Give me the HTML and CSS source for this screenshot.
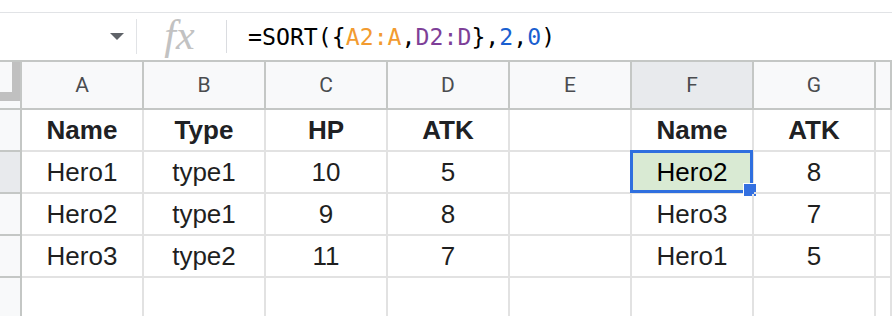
FILE: index.html
```html
<!DOCTYPE html>
<html>
<head>
  <title>Sheet - SORT</title>
  <link rel="stylesheet" href="styles.css">
</head>
<body>
  <div class="top-band"></div>

  <div class="formula-bar">
    <div class="name-box"><span class="caret"></span></div>
    <div class="fx">fx</div>
    <div class="formula">=SORT({<span class="ref-a">A2:A</span>,<span class="ref-d">D2:D</span>},<span class="num">2</span>,<span class="num">0</span>)</div>
  </div>

  <div class="sheet">
    <!-- column headers -->
    <div class="corner"><div class="freeze"></div></div>
    <div class="col-head">A</div>
    <div class="col-head">B</div>
    <div class="col-head">C</div>
    <div class="col-head">D</div>
    <div class="col-head">E</div>
    <div class="col-head active">F</div>
    <div class="col-head">G</div>
    <div class="col-head"></div>

    <!-- row 1 -->
    <div class="row-head"></div>
    <div class="cell bold">Name</div>
    <div class="cell bold">Type</div>
    <div class="cell bold">HP</div>
    <div class="cell bold">ATK</div>
    <div class="cell"></div>
    <div class="cell bold">Name</div>
    <div class="cell bold">ATK</div>
    <div class="cell"></div>

    <!-- row 2 -->
    <div class="row-head active"></div>
    <div class="cell">Hero1</div>
    <div class="cell">type1</div>
    <div class="cell">10</div>
    <div class="cell">5</div>
    <div class="cell"></div>
    <div class="cell selected">Hero2<span class="sel-box"></span><span class="handle"></span></div>
    <div class="cell">8</div>
    <div class="cell"></div>

    <!-- row 3 -->
    <div class="row-head"></div>
    <div class="cell">Hero2</div>
    <div class="cell">type1</div>
    <div class="cell">9</div>
    <div class="cell">8</div>
    <div class="cell"></div>
    <div class="cell">Hero3</div>
    <div class="cell">7</div>
    <div class="cell"></div>

    <!-- row 4 -->
    <div class="row-head"></div>
    <div class="cell">Hero3</div>
    <div class="cell">type2</div>
    <div class="cell">11</div>
    <div class="cell">7</div>
    <div class="cell"></div>
    <div class="cell">Hero1</div>
    <div class="cell">5</div>
    <div class="cell"></div>

    <!-- row 5 -->
    <div class="row-head"></div>
    <div class="cell"></div>
    <div class="cell"></div>
    <div class="cell"></div>
    <div class="cell"></div>
    <div class="cell"></div>
    <div class="cell"></div>
    <div class="cell"></div>
    <div class="cell"></div>
  </div>
</body>
</html>
```

FILE: styles.css
```css
body {
  margin: 0;
  padding: 0;
  background-color: #fff;
  font-family: "Liberation Sans", Arial, sans-serif;
  overflow: hidden;
}

.top-band {
  height: 12px;
  border-bottom: 1px solid #e1e3e6;
}

.formula-bar {
  display: flex;
  align-items: center;
  height: 47px;
  border-bottom: 2px solid #c4c7c5;
}

.name-box {
  display: flex;
  justify-content: flex-end;
  align-items: center;
  width: 137px;
  height: 35px;
  border-right: 1px solid #e1e3e6;
  box-sizing: border-box;
}

.caret {
  width: 0;
  height: 0;
  margin-right: 12px;
  border-left: 7px solid transparent;
  border-right: 7px solid transparent;
  border-top: 7px solid #5f6368;
}

.fx {
  width: 90px;
  height: 33px;
  line-height: 30px;
  text-align: center;
  border-right: 1px solid #dadce0;
  font-family: "Liberation Serif", "Times New Roman", serif;
  font-style: italic;
  font-size: 42px;
  color: #c2c2c2;
  box-sizing: border-box;
  padding-right: 4px;
}

.formula {
  padding-left: 21px;
  font-family: "DejaVu Sans Mono", "Liberation Mono", monospace;
  font-size: 23.2px;
  color: #000;
  white-space: nowrap;
}

.ref-a {
  color: #f29b30;
}

.ref-d {
  color: #7e3f98;
}

.num {
  color: #1a5fd0;
}

.sheet {
  display: grid;
  grid-template-columns: 22px repeat(7, 122px) 1fr;
  grid-template-rows: 48px repeat(5, 42px);
}

.corner,
.col-head,
.row-head {
  background-color: #f8f9fa;
  border-right: 2px solid #c4c7c5;
  border-bottom: 2px solid #c4c7c5;
  box-sizing: border-box;
}

.freeze {
  width: 12px;
  height: 30px;
  border-right: 8px solid #c0c0c0;
  border-bottom: 9px solid #c0c0c0;
}

.col-head {
  display: flex;
  align-items: center;
  justify-content: center;
  font-family: Roboto, "Liberation Sans", sans-serif;
  font-size: 21px;
  color: #4a4c4f;
}

.col-head.active,
.row-head.active {
  background-color: #e8eaed;
}

.cell {
  position: relative;
  display: flex;
  align-items: center;
  justify-content: center;
  border-right: 2px solid #e2e2e2;
  border-bottom: 2px solid #e2e2e2;
  box-sizing: border-box;
  font-size: 26px;
  color: #1f1f1f;
}

.cell.bold {
  font-weight: bold;
  color: #202124;
}

.cell.selected {
  background-color: #d9ead3;
  color: #000;
}

.sel-box {
  position: absolute;
  top: -2px;
  left: -2px;
  right: -1px;
  bottom: -1px;
  border: 3px solid #2f6fdf;
}

.handle {
  position: absolute;
  right: -5px;
  bottom: -5px;
  width: 12px;
  height: 12px;
  background-color: #3470e0;
  border: 1px solid #fff;
}
```
